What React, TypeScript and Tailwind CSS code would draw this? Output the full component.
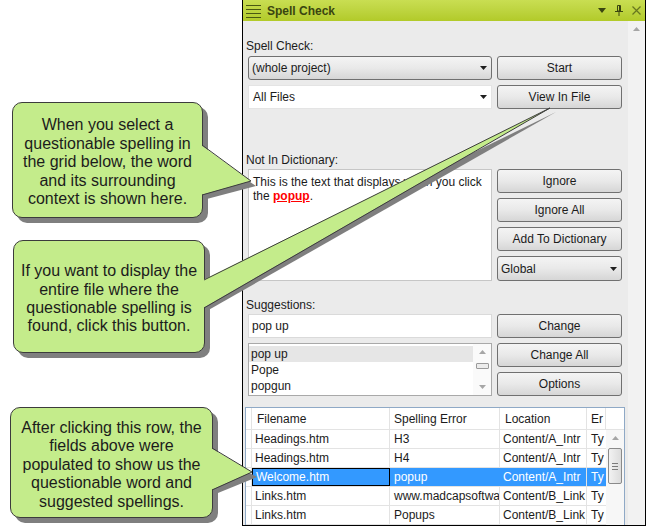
import React from "react";

const Caret = ({ color = "#1e1e1e" }: { color?: string }) => (
  <svg width="7" height="4" viewBox="0 0 7 4">
    <path d="M0 0h7L3.5 4z" fill={color} />
  </svg>
);

const UpArrow = ({ color = "#a6a6a6" }: { color?: string }) => (
  <svg width="7" height="4" viewBox="0 0 7 4">
    <path d="M0 4h7L3.5 0z" fill={color} />
  </svg>
);

function Btn({ label, className = "" }: { label: string; className?: string }) {
  return (
    <div
      className={`flex h-[24px] w-[125px] items-center justify-center rounded-[3px] border border-[#707070] bg-linear-to-b from-[#f4f4f4] via-[#e9e9e9] to-[#d6d6d6] text-[12px] text-[#1b1b1b] ${className}`}
    >
      {label}
    </div>
  );
}

function Callout({ lines, className }: { lines: string[]; className: string }) {
  return (
    <div
      className={`flex flex-col items-center justify-center rounded-[10px] border border-[#3c3c3c] bg-[#c4ec8b] pt-[5px] text-center text-[16px] leading-[18.4px] text-[#1c1c1c] shadow-[5px_5px_0_#7f7f7f] ${className}`}
    >
      {lines.map((l) => (
        <div key={l} className="whitespace-nowrap">
          {l}
        </div>
      ))}
    </div>
  );
}

const rows = [
  ["Headings.htm", "H3", "Content/A_Intr", "Ty"],
  ["Headings.htm", "H4", "Content/A_Intr", "Ty"],
  ["Welcome.htm", "popup", "Content/A_Intr", "Ty"],
  ["Links.htm", "www.madcapsoftwa", "Content/B_Link", "Ty"],
  ["Links.htm", "Popups", "Content/B_Link", "Ty"],
];

// pointer: base on box right edge (bx, y1..y2), tip (tx, ty)
const pointers = [
  { bx: 203, y1: 145, y2: 195, tx: 251, ty: 181, sx: 5, sy: 5 },
  { bx: 205, y1: 280, y2: 308, tx: 550, ty: 108, sx: 6, sy: 4 },
  { bx: 213, y1: 448, y2: 490, tx: 252, ty: 472, sx: 5, sy: 5 },
];

export default function App() {
  return (
    <div className="relative flex h-[527px] w-[646px] overflow-hidden bg-white font-['Liberation_Sans',Arial,sans-serif]">
      {/* callouts */}
      <div className="flex w-[242px] shrink-0 flex-col">
        <Callout
          className="ml-[12px] mt-[102px] h-[116px] w-[191px]"
          lines={[
            "When you select a",
            "questionable spelling in",
            "the grid below, the word",
            "and its surrounding",
            "context is shown here.",
          ]}
        />
        <Callout
          className="ml-[13px] mt-[22px] h-[113px] w-[192px]"
          lines={[
            "If you want to display the",
            "entire file where the",
            "questionable spelling is",
            "found, click this button.",
          ]}
        />
        <Callout
          className="ml-[10px] mt-[54px] h-[111px] w-[203px]"
          lines={[
            "After clicking this row, the",
            "fields above were",
            "populated to show us the",
            "questionable word and",
            "suggested spellings.",
          ]}
        />
      </div>

      {/* panel */}
      <div className="flex h-[526px] w-[404px] shrink-0 flex-col overflow-hidden border-x border-b border-black">
        <div className="flex h-[21px] shrink-0 items-center bg-linear-to-b from-[#c9de52] to-[#b2ca28] pl-[3px] pr-[4px]">
          <svg width="15" height="14" viewBox="0 0 15 14">
            <path d="M0 1.5h15M0 5.5h15M0 9.5h15M0 13.5h15" stroke="#4a5812" strokeWidth="1" />
          </svg>
          <span className="ml-[6px] text-[12px] font-bold text-[#3a4510]">Spell Check</span>
          <div className="ml-auto flex items-center gap-[9px]">
            <svg width="8" height="5" viewBox="0 0 8 5">
              <path d="M0 0h8L4 5z" fill="#3a4510" />
            </svg>
            <svg width="8" height="11" viewBox="0 0 8 11">
              <path d="M2.5 0.5h3v5.5h-3z" fill="none" stroke="#3a4510" />
              <path d="M4.5 1v5" stroke="#3a4510" />
              <path d="M0 6.5h8M4 6.5v4.5" stroke="#3a4510" />
            </svg>
            <svg width="9" height="9" viewBox="0 0 9 9">
              <path d="M0.5 0.5l8 8M8.5 0.5l-8 8" stroke="#67761f" strokeWidth="1.2" />
            </svg>
          </div>
        </div>

        <div className="flex min-h-0 flex-1">
          <div className="flex w-[385px] shrink-0 flex-col bg-[#ebebeb] pl-[2px] text-[12px] text-[#1b1b1b]">
            <div className="ml-[1px] mt-[17px] h-[16px] leading-[16px]">Spell Check:</div>
            <div className="ml-[3px] mt-[2px] flex gap-[5px]">
              <div className="flex h-[24px] w-[244px] items-center justify-between rounded-[3px] border border-[#707070] bg-linear-to-b from-[#f4f4f4] via-[#e9e9e9] to-[#d6d6d6] pl-[3px] pr-[4px]">
                <span>(whole project)</span>
                <Caret />
              </div>
              <Btn label="Start" />
            </div>
            <div className="ml-[3px] mt-[5px] flex gap-[5px]">
              <div className="flex h-[24px] w-[244px] items-center justify-between border border-[#e4e4e4] bg-white pl-[4px] pr-[4px]">
                <span>All Files</span>
                <Caret />
              </div>
              <Btn label="View In File" />
            </div>

            <div className="ml-[1px] mt-[43px] h-[16px] leading-[16px]">Not In Dictionary:</div>
            <div className="ml-[3px] mt-[1px] flex h-[112px] gap-[5px]">
              <div className="h-[112px] w-[244px] border border-[#c6c6c6] bg-white pl-[4px] pt-[5px] leading-[14px]">
                This is the text that displays when you click
                <br />
                the <span className="font-bold text-[#ff0000] underline">popup</span>.
              </div>
              <div className="flex flex-col gap-[5px]">
                <Btn label="Ignore" />
                <Btn label="Ignore All" />
                <Btn label="Add To Dictionary" />
                <div className="flex h-[25px] w-[125px] items-center justify-between rounded-[3px] border border-[#707070] bg-linear-to-b from-[#f4f4f4] via-[#e9e9e9] to-[#d6d6d6] pl-[3px] pr-[4px]">
                  <span>Global</span>
                  <Caret />
                </div>
              </div>
            </div>

            <div className="ml-[1px] mt-[16px] h-[16px] leading-[16px]">Suggestions:</div>
            <div className="ml-[3px] mt-[1px] flex gap-[5px]">
              <div className="flex h-[24px] w-[244px] items-center border border-[#dadada] bg-white pl-[3px]">
                pop up
              </div>
              <Btn label="Change" />
            </div>
            <div className="ml-[3px] mt-[5px] flex gap-[5px]">
              <div className="flex h-[53px] w-[244px] border border-[#a9a9a9] bg-white">
                <div className="flex flex-1 flex-col pt-[2px] leading-[16px]">
                  <div className="bg-[#e6e6e6] pl-[2px]">pop up</div>
                  <div className="pl-[2px]">Pope</div>
                  <div className="pl-[2px]">popgun</div>
                </div>
                <div className="flex w-[18px] flex-col items-center justify-between bg-[#fafafa] py-[6px]">
                  <UpArrow />
                  <div className="-mt-[8px] h-[6px] w-[13px] rounded-[1px] border border-[#9a9a9a] bg-[#ececec]" />
                  <Caret color="#a6a6a6" />
                </div>
              </div>
              <div className="flex flex-col gap-[5px]">
                <Btn label="Change All" />
                <Btn label="Options" />
              </div>
            </div>

            {/* grid */}
            <div className="mt-[11px] flex w-[380px] flex-1 flex-col overflow-hidden border border-b-0 border-[#8fa9c6] bg-white">
              <div className="flex h-[22px] shrink-0 border-b border-[#e3e3e3]">
                <div className="w-[6px] border-r border-[#e3e3e3]" />
                <div className="flex w-[138px] items-center border-r border-[#e3e3e3] pl-[5px]">Filename</div>
                <div className="flex w-[110px] items-center border-r border-[#e3e3e3] pl-[4px]">Spelling Error</div>
                <div className="flex w-[87px] items-center border-r border-[#e3e3e3] pl-[5px]">Location</div>
                <div className="flex w-[19px] items-center border-r border-[#e3e3e3] pl-[4px]">Er</div>
              </div>
              <div className="flex">
                <div className="flex w-[360px] flex-col">
                  {rows.map((r, i) => {
                    const sel = i === 2;
                    return (
                      <div key={i} className="flex h-[19px] border-b border-[#e3e3e3]">
                        <div className="w-[6px] border-r border-[#e3e3e3]" />
                        <div
                          className={`flex w-[138px] items-center overflow-hidden whitespace-nowrap pl-[3px] ${
                            sel ? "border border-black bg-[#3399ff] text-white" : "border-r border-[#e3e3e3]"
                          }`}
                        >
                          {r[0]}
                        </div>
                        <div
                          className={`flex w-[110px] items-center overflow-hidden whitespace-nowrap border-r pl-[4px] ${
                            sel ? "border-[#3399ff] bg-[#3399ff] text-white" : "border-[#e3e3e3]"
                          }`}
                        >
                          {r[1]}
                        </div>
                        <div
                          className={`flex w-[87px] items-center overflow-hidden whitespace-nowrap border-r pl-[3px] ${
                            sel ? "border-[#e3e3e3] bg-[#3399ff] text-white" : "border-[#e3e3e3]"
                          }`}
                        >
                          {r[2]}
                        </div>
                        <div
                          className={`flex w-[19px] items-center overflow-hidden whitespace-nowrap pl-[4px] ${
                            sel ? "bg-[#3399ff] text-white" : ""
                          }`}
                        >
                          {r[3]}
                        </div>
                      </div>
                    );
                  })}
                </div>
                <div className="flex w-[18px] flex-col items-center bg-[#f7f7f7] pt-[6px]">
                  <UpArrow />
                  <div className="mt-[8px] flex h-[36px] w-[14px] flex-col items-center justify-center gap-[2px] rounded-[2px] border border-[#8a8a8a] bg-linear-to-r from-[#f2f2f2] to-[#dcdcdc]">
                    <div className="h-px w-[6px] bg-[#7a7a7a]" />
                    <div className="h-px w-[6px] bg-[#7a7a7a]" />
                    <div className="h-px w-[6px] bg-[#7a7a7a]" />
                  </div>
                </div>
              </div>
            </div>
          </div>
          <div className="flex w-[17px] shrink-0 flex-col items-center bg-[#f2f2f2] pt-[6px]">
            <UpArrow />
          </div>
        </div>
      </div>

      {/* callout pointers */}
      <svg className="pointer-events-none absolute left-0 top-0" width="646" height="527">
        {pointers.map((p, i) => (
          <g key={i}>
            <polygon
              points={`${p.bx},${p.y1 + p.sy} ${p.tx + p.sx},${p.ty + p.sy} ${p.bx},${p.y2 + p.sy}`}
              fill="#7f7f7f"
            />
            <polygon points={`${p.bx - 2},${p.y1} ${p.tx},${p.ty} ${p.bx - 2},${p.y2}`} fill="#c4ec8b" />
            <polyline
              points={`${p.bx - 1},${p.y1} ${p.tx},${p.ty} ${p.bx - 1},${p.y2}`}
              fill="none"
              stroke="#3c3c3c"
              strokeWidth="1"
            />
          </g>
        ))}
      </svg>
    </div>
  );
}
